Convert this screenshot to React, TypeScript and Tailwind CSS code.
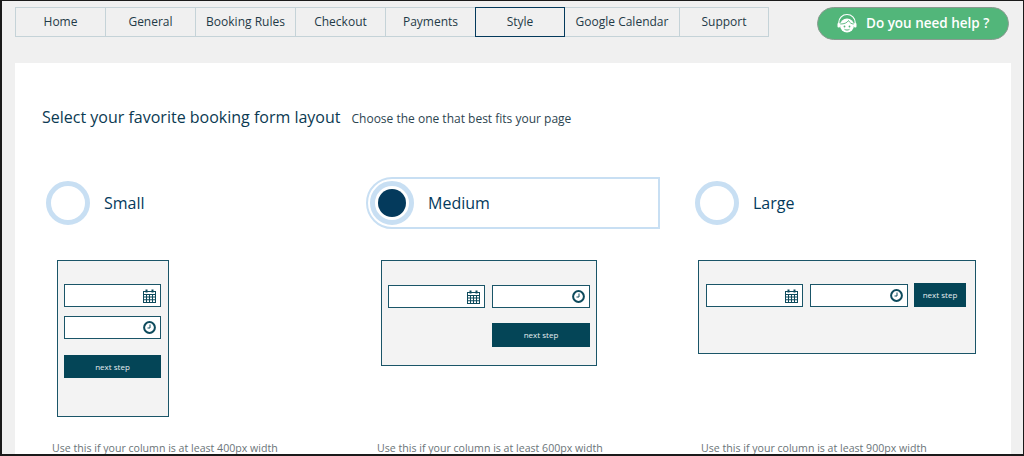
import React from "react";

const TABS = [
  { label: "Home", width: "w-[91px]" },
  { label: "General", width: "w-[91px]" },
  { label: "Booking Rules", width: "w-[101px]" },
  { label: "Checkout", width: "w-[91px]" },
  { label: "Payments", width: "w-[91px]" },
  { label: "Style", width: "w-[90px]", active: true },
  { label: "Google Calendar", width: "w-[116px]" },
  { label: "Support", width: "w-[90px]" },
];

function CalendarIcon() {
  return (
    <svg width="13" height="14" viewBox="0 0 13 14" fill="none" stroke="#0d4a5c" strokeWidth="1">
      <rect x="0.5" y="2.5" width="12" height="11" />
      <path d="M0.5 5.5H12.5M0.5 8H12.5M0.5 10.75H12.5M3.5 5.5V13.5M6.5 5.5V13.5M9.5 5.5V13.5" />
      <path d="M3.5 0.5V3.5M9.5 0.5V3.5" strokeWidth="2" />
    </svg>
  );
}

function ClockIcon() {
  return (
    <svg width="13" height="13" viewBox="0 0 13 13" fill="none" stroke="#0d4a5c">
      <circle cx="6.5" cy="6.5" r="5.4" strokeWidth="2" />
      <path d="M7 3.5V7H4.5" strokeWidth="1" />
    </svg>
  );
}

function AgentIcon() {
  return (
    <svg width="20" height="22" viewBox="0 0 20 22" fill="none">
      <path d="M1.8 11V9.5C1.8 5 5.4 1.5 10 1.5S18.2 5 18.2 9.5V11" stroke="#fff" strokeWidth="1.2" />
      <rect x="0.5" y="10" width="2.5" height="4.5" rx="1" fill="#fff" />
      <rect x="17" y="10" width="2.500" height="4.5" rx="1" fill="#fff" />
      <circle cx="10" cy="12.500" r="7" fill="#fff" />
      <path d="M3.500 11C7 11 10 10 11.500 7.500C12.500 9.500 14.500 11 16.500 11" stroke="#52b67a" strokeWidth="0.9" />
      <circle cx="7.500" cy="13.500" r="0.9" fill="#52b67a" />
      <circle cx="12.500" cy="13.500" r="0.9" fill="#52b67a" />
      <path d="M7.500 16.300C9 17.300 11 17.300 12.500 16.300" stroke="#52b67a" strokeWidth="1" />
    </svg>
  );
}

function Field({ icon, width = "w-[97px]" }: { icon: "calendar" | "clock"; width?: string }) {
  return (
    <div className={`flex h-[23px] ${width} items-center justify-end border border-[#1a5568] bg-white pr-[4px]`}>
      {icon === "calendar" ? <CalendarIcon /> : <ClockIcon />}
    </div>
  );
}

function NextButton({ size }: { size: string }) {
  return (
    <div className={`flex ${size} items-center justify-center bg-[#044557] text-[8px] text-[#e4edf0]`}>
      next step
    </div>
  );
}

function Option({ label, selected }: { label: string; selected?: boolean }) {
  if (selected) {
    return (
      <div className="flex h-[52px] w-[294px] items-center rounded-l-[26px] border-[2px] border-[#c8dff3] pl-[2px]">
        <div className="flex h-[44px] w-[44px] shrink-0 items-center justify-center rounded-full border-[5px] border-[#c8dff3] bg-white">
          <div className="h-[28px] w-[28px] rounded-full bg-[#043a5c]" />
        </div>
        <span className="ml-[14px] text-[16px] text-[#043a5c]">{label}</span>
      </div>
    );
  }
  return (
    <div className="flex h-[52px] items-center">
      <div className="h-[44px] w-[44px] shrink-0 rounded-full border-[5px] border-[#c8dff3] bg-white" />
      <span className="ml-[14px] text-[16px] text-[#043a5c]">{label}</span>
    </div>
  );
}

function Caption({ children, indent }: { children: React.ReactNode; indent: string }) {
  return <p className={`mt-[24px] ${indent} text-[10.6px] whitespace-nowrap text-[#6b7478]`}>{children}</p>;
}

export default function App() {
  return (
    <div
      className="flex h-[456px] w-[1024px] flex-col overflow-hidden border-t border-r border-b-2 border-l-2 border-[#1a1a1a] bg-[#f0f0f0] text-[#1f3a47]"
      style={{ fontFamily: '"Open Sans", "Liberation Sans", sans-serif' }}
    >
      <header className="flex h-[62px] shrink-0 items-start pt-[6px] pl-[13px]">
        <nav className="flex h-[30px]">
          {TABS.map((tab) => (
            <div
              key={tab.label}
              className={`-ml-px flex h-[30px] ${tab.width} first:ml-0 items-center justify-center border text-[12px] ${
                tab.active ? "z-10 border-[#043a5c]" : "border-[#c5d3d8]"
              }`}
            >
              {tab.label}
            </div>
          ))}
        </nav>
        <div className="ml-[48px] flex h-[33px] w-[192px] items-center rounded-full border border-[#8a9a90] bg-[#52b67a] pl-[19px] text-[13.5px] font-semibold text-white">
          <AgentIcon />
          <span className="ml-[9px]">Do you need help ?</span>
        </div>
      </header>

      <main className="ml-[13px] mr-[12px] flex-1 bg-white">
        <div className="mt-[42px] ml-[27px] flex items-baseline">
          <h1 className="text-[16px] font-normal text-[#0b3a52]">Select your favorite booking form layout</h1>
          <p className="ml-[11px] text-[12px] text-[#2c4450]">Choose the one that best fits your page</p>
        </div>

        <div className="mt-[48px] flex">
          <section className="ml-[31px] w-[320px]">
            <Option label="Small" />
            <div className="mt-[31px] h-[157px]">
              <div className="ml-[11px] flex h-[157px] w-[112px] flex-col border border-[#1a5568] bg-[#f3f3f3] pt-[23px] pl-[6px]">
                <Field icon="calendar" />
                <div className="mt-[9px]">
                  <Field icon="clock" />
                </div>
                <div className="mt-[16px]">
                  <NextButton size="h-[23px] w-[97px]" />
                </div>
              </div>
            </div>
            <Caption indent="ml-[6px]">Use this if your column is at least 400px width</Caption>
          </section>

          <section className="w-[329px]">
            <Option label="Medium" selected />
            <div className="mt-[31px] h-[157px]">
              <div className="ml-[15px] flex h-[106px] w-[216px] flex-col border border-[#1a5568] bg-[#f3f3f3] pt-[24px] pl-[6px]">
                <div className="flex gap-[7px]">
                  <Field icon="calendar" />
                  <Field icon="clock" width="w-[98px]" />
                </div>
                <div className="mt-[15px] ml-[104px]">
                  <NextButton size="h-[24px] w-[98px]" />
                </div>
              </div>
            </div>
            <Caption indent="ml-[11px]">Use this if your column is at least 600px width</Caption>
          </section>

          <section className="flex-1">
            <Option label="Large" />
            <div className="mt-[31px] h-[157px]">
              <div className="ml-[3px] flex h-[94px] w-[278px] items-start gap-[7px] border border-[#1a5568] bg-[#f3f3f3] pt-[23px] pl-[7px]">
                <Field icon="calendar" />
                <Field icon="clock" width="w-[98px]" />
                <div className="-mt-px -ml-px">
                  <NextButton size="h-[24px] w-[52px]" />
                </div>
              </div>
            </div>
            <Caption indent="ml-[6px]">Use this if your column is at least 900px width</Caption>
          </section>
        </div>
      </main>
    </div>
  );
}
